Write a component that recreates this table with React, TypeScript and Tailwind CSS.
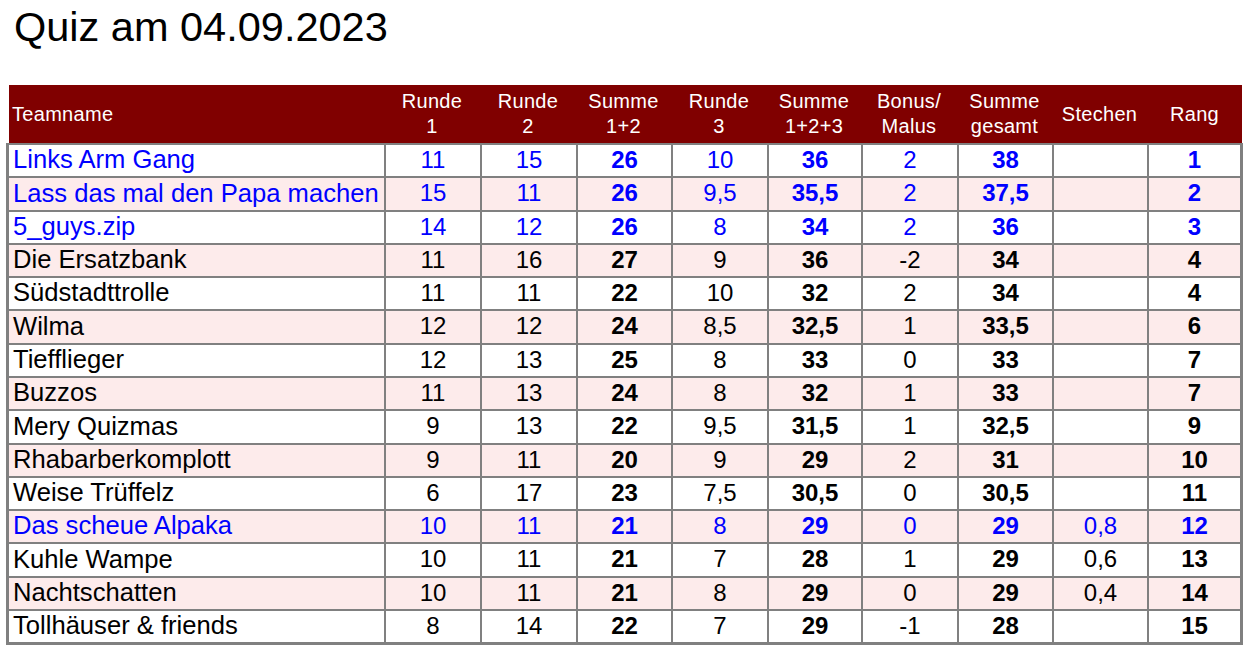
import React from "react";

type Row = {
  name: string;
  vals: string[];
  blue?: boolean;
};

const rows: Row[] = [
  { name: "Links Arm Gang", vals: ["11", "15", "26", "10", "36", "2", "38", "", "1"], blue: true },
  { name: "Lass das mal den Papa machen", vals: ["15", "11", "26", "9,5", "35,5", "2", "37,5", "", "2"], blue: true },
  { name: "5_guys.zip", vals: ["14", "12", "26", "8", "34", "2", "36", "", "3"], blue: true },
  { name: "Die Ersatzbank", vals: ["11", "16", "27", "9", "36", "-2", "34", "", "4"] },
  { name: "Südstadttrolle", vals: ["11", "11", "22", "10", "32", "2", "34", "", "4"] },
  { name: "Wilma", vals: ["12", "12", "24", "8,5", "32,5", "1", "33,5", "", "6"] },
  { name: "Tiefflieger", vals: ["12", "13", "25", "8", "33", "0", "33", "", "7"] },
  { name: "Buzzos", vals: ["11", "13", "24", "8", "32", "1", "33", "", "7"] },
  { name: "Mery Quizmas", vals: ["9", "13", "22", "9,5", "31,5", "1", "32,5", "", "9"] },
  { name: "Rhabarberkomplott", vals: ["9", "11", "20", "9", "29", "2", "31", "", "10"] },
  { name: "Weise Trüffelz", vals: ["6", "17", "23", "7,5", "30,5", "0", "30,5", "", "11"] },
  { name: "Das scheue Alpaka", vals: ["10", "11", "21", "8", "29", "0", "29", "0,8", "12"], blue: true },
  { name: "Kuhle Wampe", vals: ["10", "11", "21", "7", "28", "1", "29", "0,6", "13"] },
  { name: "Nachtschatten", vals: ["10", "11", "21", "8", "29", "0", "29", "0,4", "14"] },
  { name: "Tollhäuser & friends", vals: ["8", "14", "22", "7", "29", "-1", "28", "", "15"] },
];

const headers: string[][] = [
  ["Runde", "1"],
  ["Runde", "2"],
  ["Summe", "1+2"],
  ["Runde", "3"],
  ["Summe", "1+2+3"],
  ["Bonus/", "Malus"],
  ["Summe", "gesamt"],
  ["Stechen"],
  ["Rang"],
];

// Summen und Rang sind fett
const boldCols = [2, 4, 6, 8];

const cols = "grid grid-cols-[375px_96px_96px_95px_96px_94px_96px_95px_95px_1fr]";

export default function App() {
  return (
    <div className="w-[1248px] h-[652px] bg-white pt-[6px] font-['Liberation_Sans',Arial,sans-serif] text-black">
      <h1 className="pl-[14px] text-[41.5px] leading-[42px]">Quiz am 04.09.2023</h1>

      <div className="mt-[37px] ml-[9px] w-[1233px]">
        <div className={`${cols} h-[58px] bg-[#800000] text-white text-[20px] leading-[25px] tracking-[0.3px]`}>
          <div className="flex items-center pl-[3px]">Teamname</div>
          {headers.map((h, i) => (
            <div key={i} className="flex flex-col items-center justify-center text-center">
              {h.map((t) => (
                <span key={t}>{t}</span>
              ))}
            </div>
          ))}
        </div>

        <div className="-ml-[3px] w-[1237px] border-l-[3px] border-r-[3px] border-b-[3px] border-[#808080]">
          {rows.map((r, i) => {
            const h = Math.round(33.29 * (i + 1)) - Math.round(33.29 * i);
            const color = r.blue ? "text-[#0000ff]" : "text-black";
            return (
              <div
                key={r.name}
                className={`${cols} border-t-2 border-[#808080] ${h === 34 ? "h-[34px]" : "h-[33px]"} ${
                  i % 2 === 1 ? "bg-[#fdebeb]" : "bg-white"
                } ${color}`}
              >
                <div className="flex items-center pl-[4px] pb-[3px] text-[25.6px] leading-[28px] whitespace-nowrap">
                  {r.name}
                </div>
                {r.vals.map((v, j) => (
                  <div
                    key={j}
                    className={`flex items-center justify-center border-l-2 border-[#808080] pb-[2px] text-[24px] leading-[24px] ${
                      boldCols.includes(j) ? "font-bold" : ""
                    }`}
                  >
                    {v}
                  </div>
                ))}
              </div>
            );
          })}
        </div>
      </div>
    </div>
  );
}
